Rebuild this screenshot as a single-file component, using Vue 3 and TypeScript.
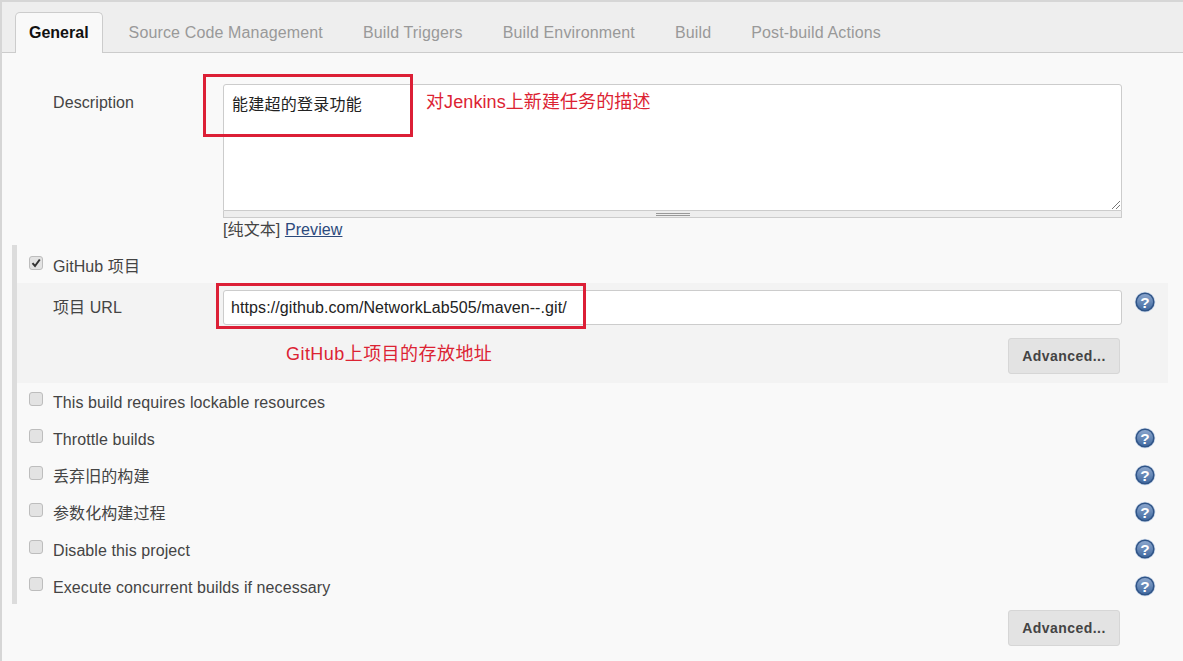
<script setup lang="ts">
const tabs: string[] = ['Source Code Management', 'Build Triggers', 'Build Environment', 'Build', 'Post-build Actions']
const options: { label: string; help: boolean }[] = [
  { label: 'This build requires lockable resources', help: false },
  { label: 'Throttle builds', help: true },
  { label: '丢弃旧的构建', help: true },
  { label: '参数化构建过程', help: true },
  { label: 'Disable this project', help: true },
  { label: 'Execute concurrent builds if necessary', help: true },
]
</script>

<template>
  <div class="page">
    <nav class="tabbar">
      <span class="tab active">General</span>
      <span v-for="t in tabs" :key="t" class="tab">{{ t }}</span>
    </nav>

    <div class="desc-row">
      <div class="label desc-label">Description</div>
      <div class="desc-field">
        <div class="textarea">
          能建超的登录功能
          <svg class="resize" width="12" height="12" viewBox="0 0 12 12"><path d="M11 3 3 11M11 7 7 11" stroke="#777" fill="none" /></svg>
        </div>
        <div class="grippie"><span class="grip"></span></div>
        <div class="preview">[纯文本] <a>Preview</a></div>
      </div>
    </div>

    <section class="section">
      <div class="check-row first">
        <span class="box checked">
          <svg width="10" height="10" viewBox="0 0 10 10"><path d="M1.5 5.2 4 8l4.8-6.5" stroke="#333" stroke-width="2" fill="none" /></svg>
        </span>
        <span class="check-label">GitHub 项目</span>
      </div>
      <div class="nested">
        <div class="url-row">
          <div class="label">项目 URL</div>
          <div class="url-input">https://github.com/NetworkLab505/maven--.git/</div>
          <svg class="help" viewBox="0 0 20 20">
            <defs>
              <linearGradient id="helpFill" x1="0" y1="0" x2="0" y2="1">
                <stop offset="0" stop-color="#8fa9cf" />
                <stop offset="1" stop-color="#3f689f" />
              </linearGradient>
            </defs>
            <circle cx="10" cy="10" r="9.4" fill="#c9d6e8" />
            <circle cx="10" cy="10" r="8" fill="url(#helpFill)" stroke="#2f5487" stroke-width="1.4" />
            <text x="10" y="15" text-anchor="middle" class="q">?</text>
          </svg>
        </div>
        <div class="adv-row"><button class="adv">Advanced...</button></div>
      </div>
      <div v-for="o in options" :key="o.label" class="check-row">
        <span class="box"></span>
        <span class="check-label">{{ o.label }}</span>
        <svg v-if="o.help" class="help" viewBox="0 0 20 20">
          <circle cx="10" cy="10" r="9.4" fill="#c9d6e8" />
          <circle cx="10" cy="10" r="8" fill="url(#helpFill)" stroke="#2f5487" stroke-width="1.4" />
          <text x="10" y="15" text-anchor="middle" class="q">?</text>
        </svg>
      </div>
    </section>
    <div class="bottom-adv"><button class="adv">Advanced...</button></div>

    <div class="mark mark-a"></div>
    <div class="note note-a">对Jenkins上新建任务的描述</div>
    <div class="mark mark-b"></div>
    <div class="note note-b">GitHub上项目的存放地址</div>
  </div>
</template>

<style scoped>
.page {
  position: relative;
  width: 1183px;
  height: 661px;
  box-sizing: border-box;
  overflow: hidden;
  background: #f9f9f9;
  border-top: 2px solid #d6d6d6;
  border-left: 2px solid #d6d6d6;
  font-family: "Liberation Sans", "Noto Sans CJK SC", sans-serif;
  font-size: 16px;
  letter-spacing: 0.09px;
  color: #333;
}
.tabbar {
  display: flex;
  height: 50px;
  box-sizing: content-box;
  align-items: flex-end;
  padding-left: 13px;
  background: #eee;
  border-bottom: 1px solid #ccc;
}
.tab {
  height: 40px;
  line-height: 42px;
  padding: 0 20px;
  color: #999;
  letter-spacing: 0.14px;
}
.tab.active {
  height: 41px;
  margin-bottom: -1px;
  padding: 0 13px;
  box-sizing: border-box;
  background: #f9f9f9;
  border: 1px solid #ccc;
  border-bottom: none;
  border-radius: 5px 5px 0 0;
  color: #111;
  font-weight: 700;
  letter-spacing: 0;
  line-height: 40px;
}
.tab.active + .tab { margin-left: 6px; }
.desc-row {
  display: flex;
  padding-top: 31px;
}
.label {
  width: 170px;
  flex: none;
  color: #444;
  line-height: 20px;
}
.desc-label {
  margin-left: 51px;
  line-height: 38px;
}
.desc-field { width: 899px; }
.textarea {
  position: relative;
  height: 127px;
  box-sizing: border-box;
  padding: 10px 8px;
  background: #fff;
  border: 1px solid #ccc;
  border-radius: 3px 3px 0 0;
  color: #222;
  font-size: 16px;
  letter-spacing: 0.25px;
  line-height: 20px;
}
.resize { position: absolute; right: 0; bottom: 0; }
.grippie {
  display: flex;
  justify-content: center;
  align-items: center;
  height: 6px;
  background: #eee;
  border: 1px solid #ccc;
  border-top: none;
}
.grip {
  width: 34px;
  height: 3px;
  border-top: 1px solid #999;
  border-bottom: 1px solid #999;
  box-sizing: border-box;
}
.preview {
  margin-top: 2px;
  line-height: 20px;
  color: #444;
}
.preview a { color: #2c4a7c; text-decoration: underline; }
.section {
  margin: 5px 0 0 10px;
  border-left: 5px solid #dcdcdc;
  height: 359px;
  box-sizing: border-box;
}
.check-row {
  display: flex;
  align-items: center;
  height: 37px;
  padding-left: 12px;
  width: 1139px;
  box-sizing: border-box;
}
.check-row.first { height: 38px; padding-top: 6px; }
.box {
  display: flex;
  align-items: center;
  justify-content: center;
  width: 14px;
  height: 14px;
  box-sizing: border-box;
  margin-top: -7px;
  background: #e3e3e3;
  border: 1px solid #bdbdbd;
  border-radius: 3px;
}
.check-row.first .box { margin-top: -9px; }
.check-label {
  margin-left: 10px;
  color: #444;
  line-height: 20px;
}
.check-row .help { margin-left: auto; margin-top: -4px; }
.nested {
  width: 1151px;
  height: 100px;
  background: #f3f3f3;
  padding-top: 7px;
  box-sizing: border-box;
  margin-bottom: 1px;
}
.url-row {
  display: flex;
  align-items: center;
  padding-left: 36px;
}
.url-input {
  width: 899px;
  height: 35px;
  line-height: 33px;
  box-sizing: border-box;
  padding-left: 7px;
  flex: none;
  background: #fff;
  border: 1px solid #ccc;
  border-radius: 3px;
  color: #222;
}
.help {
  width: 22px;
  height: 22px;
  flex: none;
}
.url-row .help { margin-left: 12px; margin-top: -11px; }
.q {
  fill: #fff;
  font-size: 14px;
  font-weight: 700;
  font-family: "Liberation Sans", sans-serif;
}
.adv-row {
  display: flex;
  justify-content: flex-end;
  padding: 13px 48px 0 0;
}
.adv {
  width: 112px;
  height: 36px;
  padding: 0;
  font-family: "Liberation Sans", sans-serif;
  font-size: 14px;
  font-weight: 700;
  letter-spacing: 0.45px;
  color: #444;
  background: #e3e3e3;
  border: 1px solid #d6d6d6;
  border-radius: 3px;
}
.bottom-adv {
  display: flex;
  justify-content: flex-end;
  width: 1118px;
  margin-top: 6px;
}
.mark {
  position: absolute;
  box-sizing: border-box;
  border: 3px solid #dc1f36;
}
.mark-a { left: 201px; top: 72px; width: 210px; height: 63px; }
.mark-b { left: 214px; top: 281px; width: 370px; height: 46px; }
.note {
  position: absolute;
  color: #dc2333;
  font-size: 18px;
  line-height: 24px;
}
.note-a { left: 424px; top: 88px; }
.note-b { left: 284px; top: 340px; letter-spacing: 0.45px; }
</style>

<style>
html, body { margin: 0; background: #f9f9f9; }
</style>
